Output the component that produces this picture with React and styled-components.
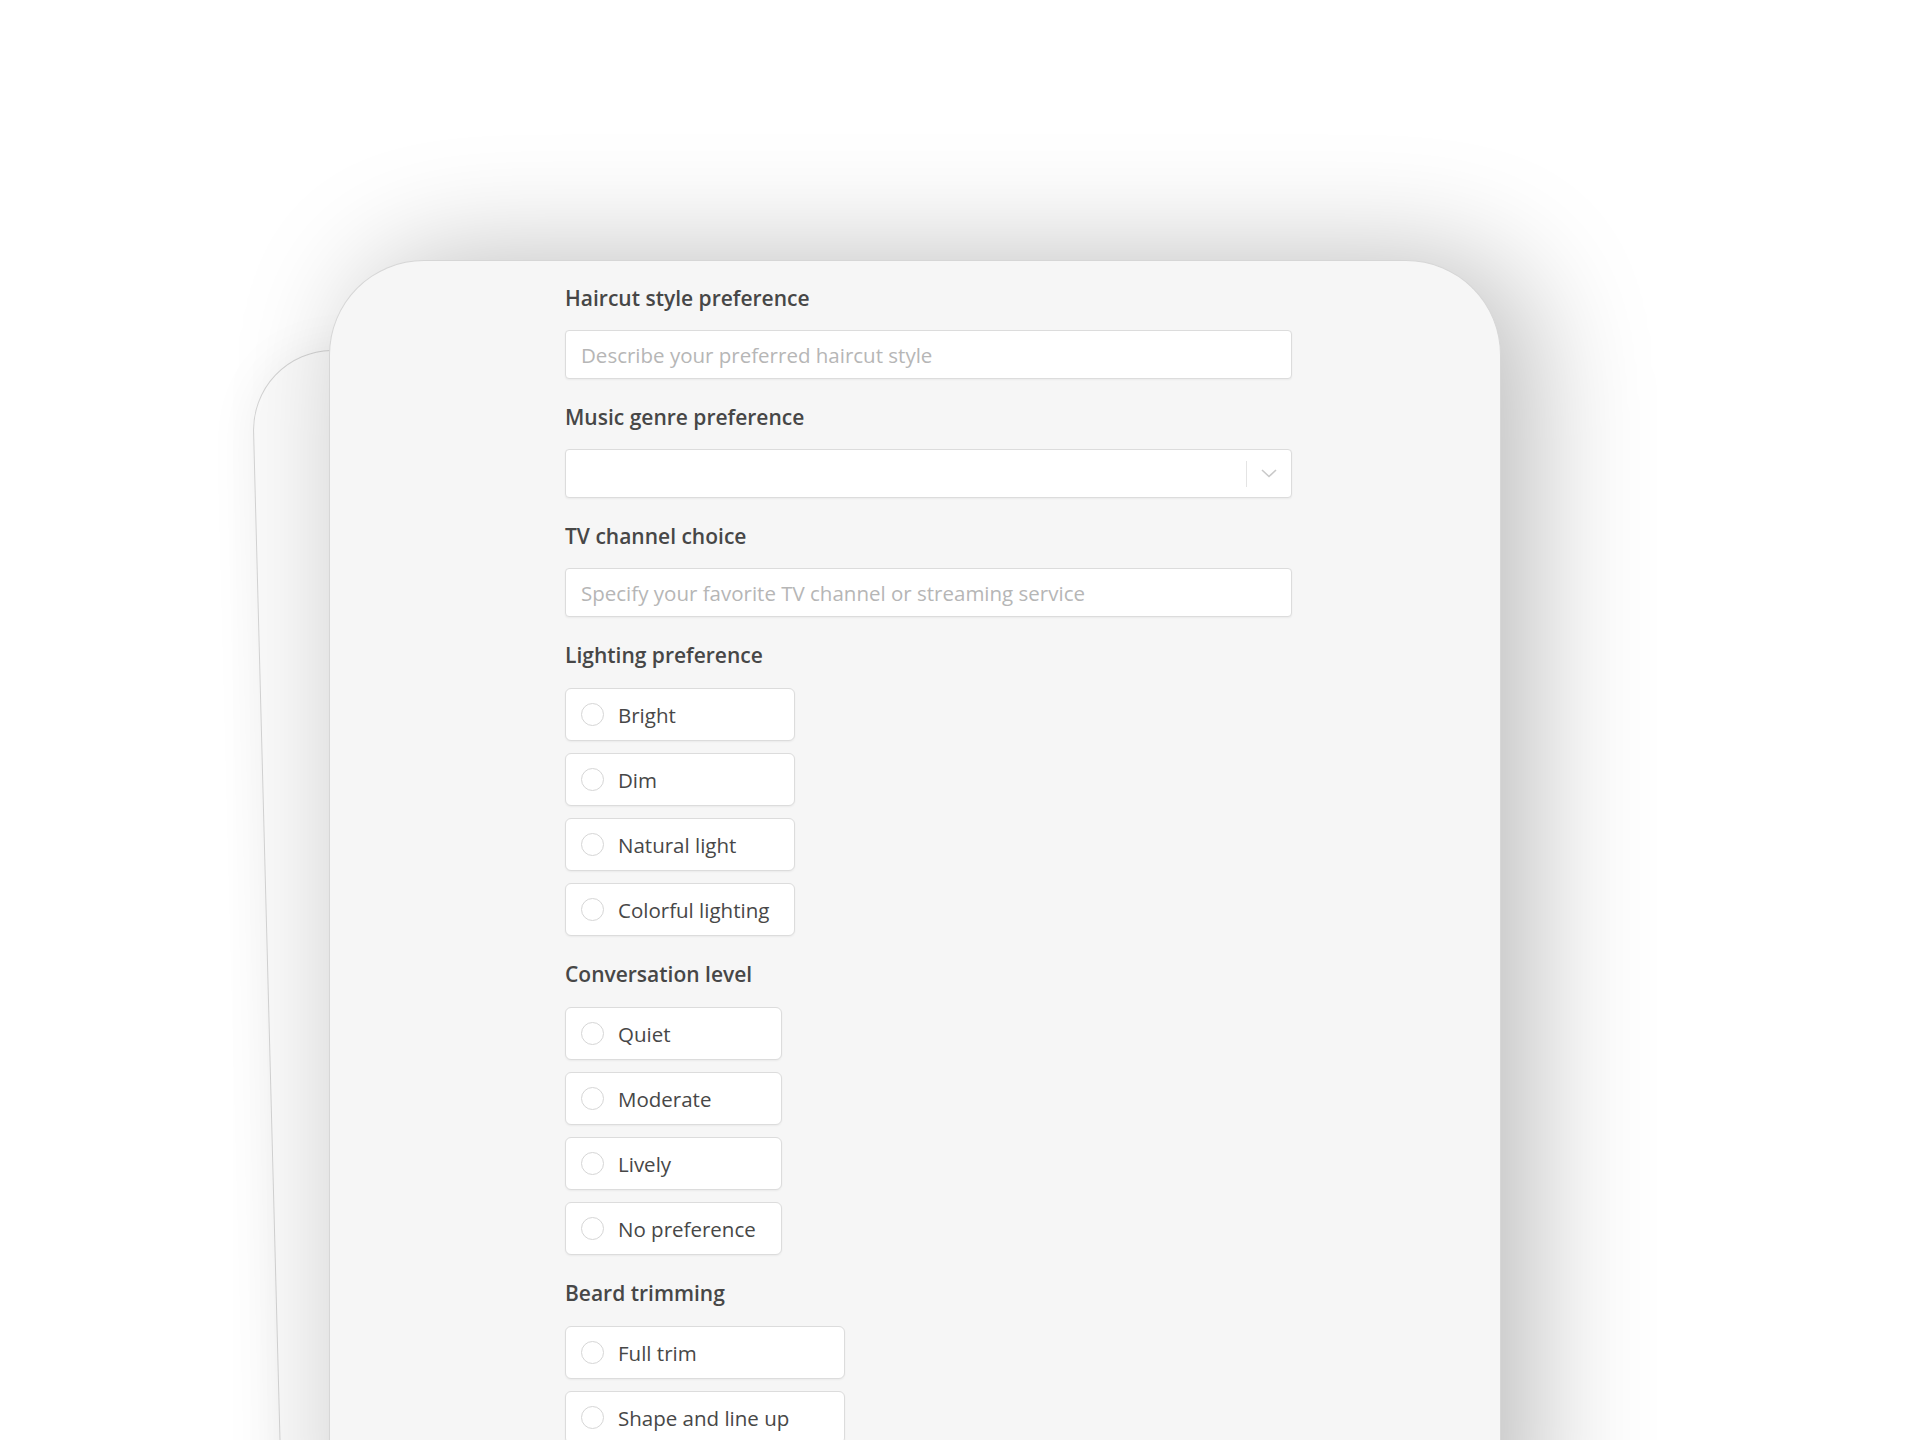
import React from "react";
import styled, { createGlobalStyle } from "styled-components";

const GlobalStyle = createGlobalStyle`
    html, body {
        margin: 0;
        padding: 0;
        background: #ffffff;
    }
    body {
        font-family: 'Open Sans', 'Liberation Sans', sans-serif;
    }
`;

const Stage = styled.div`
    position: relative;
    width: 1920px;
    height: 1440px;
    overflow: hidden;
    background: #ffffff;
    padding-top: 260px;
    box-sizing: border-box;
`;

// the second sheet peeking out behind, slightly tilted
const BackSheet = styled.div`
    position: absolute;
    left: 251px;
    top: 352px;
    width: 1150px;
    height: 1200px;
    box-sizing: border-box;
    border: 1px solid #d3d3d3;
    border-radius: 80px;
    background: #fafafa;
    transform-origin: top left;
    transform: rotate(-1.5deg);
    box-shadow: 0 0 50px rgba(0, 0, 0, 0.06);
`;

const FrontSheet = styled.div`
    position: relative;
    z-index: 1;
    margin-left: 329px;
    width: 1172px;
    height: 1300px;
    box-sizing: border-box;
    border: 1px solid #d6d6d6;
    border-bottom: none;
    border-radius: 95px 95px 0 0;
    background: #f6f6f6;
    box-shadow: 30px 0 120px rgba(0, 0, 0, 0.27);
    padding: 24px 0 0 235px;
`;

const Form = styled.form`
    width: 727px;
    display: flex;
    flex-direction: column;
`;

const Field = styled.div`
    display: flex;
    flex-direction: column;
    align-items: flex-start;
    margin-bottom: 25px;
`;

const Label = styled.label`
    font-size: 21px;
    line-height: 27px;
    font-weight: 600;
    color: #474747;
    margin-bottom: 18px;
`;

const TextInput = styled.input`
    width: 100%;
    height: 49px;
    box-sizing: border-box;
    border: 1px solid #dcdcdc;
    border-radius: 4px;
    background: #ffffff;
    box-shadow: 0 1px 2px rgba(0, 0, 0, 0.05);
    padding: 0 15px;
    font-family: inherit;
    font-size: 20.5px;
    color: #444;
    outline: none;

    &::placeholder {
        color: #b6b6b6;
    }
`;

const SelectBox = styled.div`
    width: 100%;
    height: 49px;
    box-sizing: border-box;
    border: 1px solid #dcdcdc;
    border-radius: 4px;
    background: #ffffff;
    box-shadow: 0 1px 2px rgba(0, 0, 0, 0.05);
    display: flex;
    align-items: center;
`;

const SelectValue = styled.div`
    flex: 1;
`;

const Separator = styled.span`
    width: 1px;
    height: 26px;
    background: #e4e4e4;
`;

const ChevronSlot = styled.span`
    width: 44px;
    display: flex;
    justify-content: center;
    align-items: center;
`;

const OptionList = styled.div`
    display: grid;
    grid-template-columns: max-content;
    row-gap: 12px;
    margin-top: 1px;
`;

const Option = styled.label`
    height: 53px;
    box-sizing: border-box;
    border: 1px solid #dcdcdc;
    border-radius: 6px;
    background: #ffffff;
    box-shadow: 0 1px 2px rgba(0, 0, 0, 0.05);
    display: flex;
    align-items: center;
    gap: 14px;
    padding: 0 25px 0 15px;
    font-size: 20.5px;
    color: #474747;
`;

const Radio = styled.span`
    width: 23px;
    height: 23px;
    box-sizing: border-box;
    border: 1px solid #d6d6d6;
    border-radius: 50%;
    background: #fff;
    flex-shrink: 0;
`;

const Chevron = () => (
    <svg width="16" height="9" viewBox="0 0 16 9" fill="none">
        <path d="M1 1 L8 7.5 L15 1" stroke="#c9c9c9" strokeWidth="1.6" />
    </svg>
);

const groups = [
    { label: "Lighting preference", options: ["Bright", "Dim", "Natural light", "Colorful lighting"] },
    { label: "Conversation level", options: ["Quiet", "Moderate", "Lively", "No preference"] },
    { label: "Beard trimming", options: ["Full trim", "Shape and line up", "Not needed this time"] },
];

const App = () => {
    return (
        <Stage>
            <GlobalStyle />
            <BackSheet />
            <FrontSheet>
                <Form>
                    <Field>
                        <Label>Haircut style preference</Label>
                        <TextInput placeholder="Describe your preferred haircut style" />
                    </Field>
                    <Field>
                        <Label>Music genre preference</Label>
                        <SelectBox>
                            <SelectValue />
                            <Separator />
                            <ChevronSlot>
                                <Chevron />
                            </ChevronSlot>
                        </SelectBox>
                    </Field>
                    <Field>
                        <Label>TV channel choice</Label>
                        <TextInput placeholder="Specify your favorite TV channel or streaming service" />
                    </Field>
                    {groups.map((group) => (
                        <Field key={group.label}>
                            <Label>{group.label}</Label>
                            <OptionList>
                                {group.options.map((option) => (
                                    <Option key={option}>
                                        <Radio />
                                        {option}
                                    </Option>
                                ))}
                            </OptionList>
                        </Field>
                    ))}
                </Form>
            </FrontSheet>
        </Stage>
    );
};

export default App;
